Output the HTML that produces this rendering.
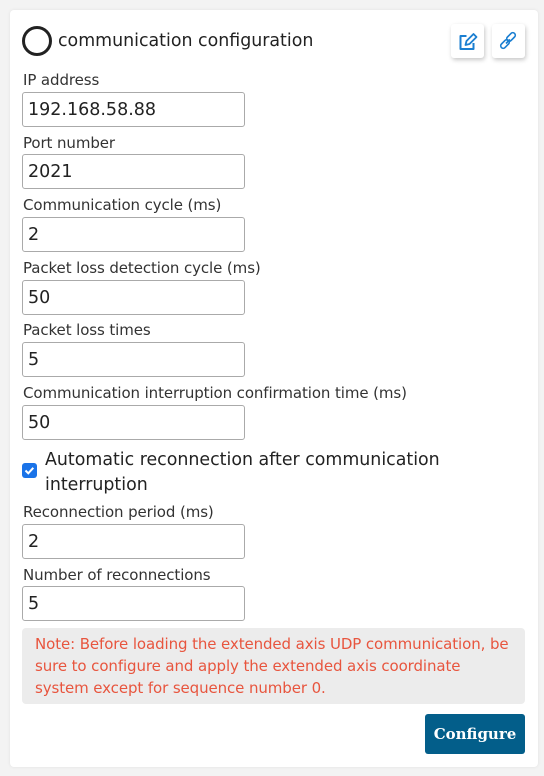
<!DOCTYPE html>
<html><head><meta charset="utf-8"><style>
*{box-sizing:border-box;margin:0;padding:0}
body{width:544px;height:776px;background:#f3f3f3;font-family:"DejaVu Sans","Liberation Sans",sans-serif;color:#333;position:relative;overflow:hidden}
.card{position:absolute;left:10px;top:10px;width:528px;height:757px;background:#fff;border-radius:4px;box-shadow:0 0 3px rgba(0,0,0,.08)}
.a{position:absolute}
.lbl{position:absolute;left:23px;font-size:15px;color:#333;white-space:nowrap;letter-spacing:-0.1px}
.in{position:absolute;left:22px;width:223px;height:35px;border:1px solid #aaa;border-radius:3px;font-size:17.5px;padding:1px 0 0 5px;line-height:33px;color:#222;background:#fff}
.ib{position:absolute;top:24px;width:33px;height:34px;background:#fff;border-radius:3px;box-shadow:1px 2px 4px rgba(0,0,0,.22)}
</style></head><body>
<div class="card"></div>
<div class="a" style="left:22px;top:26px;width:30px;height:30px;border:3px solid #222;border-radius:50%"></div>
<div class="a" style="left:58px;top:31px;font-size:17.4px;color:#222;white-space:nowrap">communication configuration</div>
<div class="ib" style="left:451px"><svg width="33" height="34" viewBox="0 0 32 34"><path d="M15 12h-6v13h13v-6" fill="none" stroke="#1b7fd1" stroke-width="2" stroke-linejoin="round"/><path d="M14 21l1-4 7-7 3 3-7 7z" fill="none" stroke="#1b7fd1" stroke-width="1.8" stroke-linejoin="round"/></svg></div>
<div class="ib" style="left:492px"><svg width="33" height="34" viewBox="0 0 32 34"><g fill="none" stroke="#1b7fd1" stroke-width="1.6"><rect x="16" y="8" width="5" height="10" rx="2.5" transform="rotate(45 18.5 13)"/><rect x="10" y="15" width="5" height="10" rx="2.5" transform="rotate(45 12.5 20)"/><path d="M13.5 19.5l4-4"/></g></svg></div>

<div class="lbl" style="top:71px">IP address</div><div class="in" style="top:92px">192.168.58.88</div>
<div class="lbl" style="top:134px">Port number</div><div class="in" style="top:154px">2021</div>
<div class="lbl" style="top:196px">Communication cycle (ms)</div><div class="in" style="top:217px">2</div>
<div class="lbl" style="top:259px">Packet loss detection cycle (ms)</div><div class="in" style="top:280px">50</div>
<div class="lbl" style="top:321px">Packet loss times</div><div class="in" style="top:342px">5</div>
<div class="lbl" style="top:384px">Communication interruption confirmation time (ms)</div><div class="in" style="top:405px">50</div>

<div class="a" style="left:22px;top:463px;width:15px;height:15px;background:#1a73e8;border-radius:3px"><svg width="15" height="15"><path d="M3.5 7.5l2.8 2.8 5-5.5" fill="none" stroke="#fff" stroke-width="2"/></svg></div>
<div class="a" style="left:45px;top:448px;font-size:17.4px;line-height:25px;color:#222;width:460px">Automatic reconnection after communication interruption</div>

<div class="lbl" style="top:503px">Reconnection period (ms)</div><div class="in" style="top:524px">2</div>
<div class="lbl" style="top:566px">Number of reconnections</div><div class="in" style="top:586px">5</div>

<div class="a" style="left:22px;top:628px;width:503px;height:76px;background:#ececec;border-radius:4px;padding:5px 6px 0 13px;font-size:15px;line-height:22px;color:#e8553e;letter-spacing:-0.1px">Note: Before loading the extended axis UDP communication, be<br>sure to configure and apply the extended axis coordinate<br>system except for sequence number 0.</div>

<div class="a" style="left:425px;top:714px;width:100px;height:40px;background:#035e8a;border-radius:3px;color:#fff;font-weight:bold;font-size:15px;line-height:40px;text-align:center;font-family:'DejaVu Serif','Liberation Serif',serif">Configure</div>
</body></html>
